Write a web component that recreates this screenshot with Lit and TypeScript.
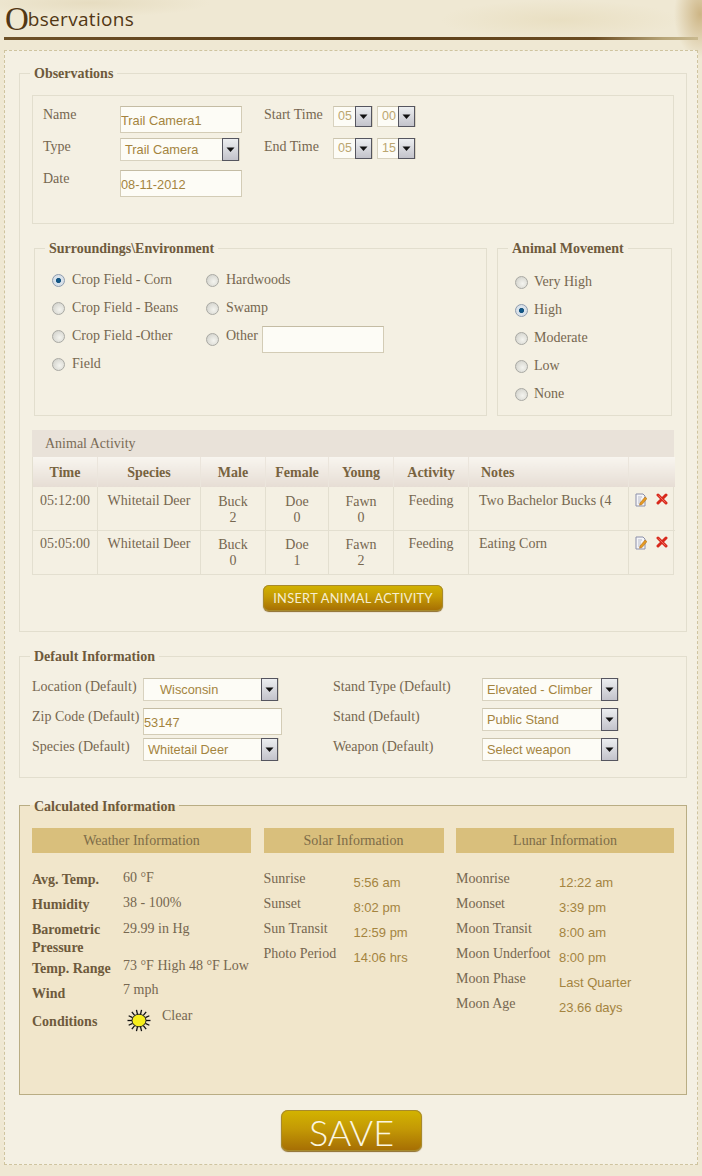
import { LitElement, html, css, svg } from "lit";
import { customElement } from "lit/decorators.js";

const arrow = html`<svg width="9" height="7" viewBox="0 0 9 7"><path d="M0.5 1.5h8L4.5 6z" fill="#111"/></svg>`;

function sel(text: string, cls = "", valCls = "") {
  return html`<div class="sel ${cls}"><span class="val ${valCls}">${text}</span><span class="btn">${arrow}</span></div>`;
}
function opt(label: string, checked = false) {
  return html`<label class="opt"><input class="radio" type="radio" ?checked=${checked} /><span>${label}</span></label>`;
}

const editIcon = html`<svg width="12" height="14" viewBox="0 0 12 14">
  <path d="M1 1h7l2 2v10H1z" fill="#f5f5f8" stroke="#8b8fa8"/>
  <path d="M3 4h4M3 6h3M3 8h3M3 10h4" stroke="#b9bcc9"/>
  <path d="M5 10l5-6 2 1.600-5 6-2.500 .6z" fill="#e59a22" stroke="#a8660f" stroke-width=".5"/>
</svg>`;
const delIcon = html`<svg width="12" height="12" viewBox="0 0 12 12">
  <path d="M2 2l8 8M10 2l-8 8" stroke="#d8291c" stroke-width="3" stroke-linecap="round"/>
  <path d="M2.500 2.500l7 7" stroke="#f2786c" stroke-width=".8"/>
</svg>`;

const rays = Array.from({ length: 14 }, (_, i) => {
  const a = (i / 14) * Math.PI * 2;
  const x1 = 12 + Math.cos(a) * 7;
  const y1 = 11.5 + Math.sin(a) * 6.5;
  const x2 = 12 + Math.cos(a) * 11.5;
  const y2 = 11.5 + Math.sin(a) * 11;
  return svg`<line x1=${x1} y1=${y1} x2=${x2} y2=${y2} stroke="#111" stroke-width="1.300"/>`;
});
const sun = html`<svg class="sun" width="24" height="23" viewBox="0 0 24 23">${rays}
  <ellipse cx="12" cy="11.500" rx="7" ry="6.300" fill="#f6ee1c" stroke="#222" stroke-width="1"/></svg>`;

const weather = [
  { l: "Avg. Temp.", v: "60 °F", h: 25, o: -2 },
  { l: "Humidity", v: "38 - 100%", h: 25, o: -2 },
  { l: "Barometric Pressure", v: "29.99 in Hg", h: 39, o: -1 },
  { l: "Temp. Range", v: "73 °F High 48 °F Low", h: 25, o: -3 },
  { l: "Wind", v: "7 mph", h: 28, o: -4 },
];
const solar = [
  ["Sunrise", "5:56 am"],
  ["Sunset", "8:02 pm"],
  ["Sun Transit", "12:59 pm"],
  ["Photo Period", "14:06 hrs"],
];
const lunar = [
  ["Moonrise", "12:22 am"],
  ["Moonset", "3:39 pm"],
  ["Moon Transit", "8:00 am"],
  ["Moon Underfoot", "8:00 pm"],
  ["Moon Phase", "Last Quarter"],
  ["Moon Age", "23.66 days"],
];
const activity = [
  ["05:12:00", "Whitetail Deer", "Buck", "2", "Doe", "0", "Fawn", "0", "Feeding", "Two Bachelor Bucks (4"],
  ["05:05:00", "Whitetail Deer", "Buck", "0", "Doe", "1", "Fawn", "2", "Feeding", "Eating Corn"],
];

@customElement("app-root")
export class AppRoot extends LitElement {
  static styles = css`
    :host {
      display: block;
      width: 702px;
      height: 1176px;
      overflow: hidden;
      box-sizing: border-box;
      font: 14px/16px "Liberation Serif", serif;
      color: #766750;
      background:
        radial-gradient(ellipse 26px 44px at 700px 14px, #cdb585 0%, rgba(205, 181, 133, 0) 100%),
        radial-gradient(ellipse 120px 14px at 90px 3px, #e6dcc0 0%, rgba(230, 220, 192, 0) 100%),
        radial-gradient(ellipse 120px 20px at 560px 20px, #e9dfc2 0%, rgba(233, 223, 194, 0) 100%),
        #efe8d3;
    }
    * { box-sizing: border-box; }
    .head { height: 50px; padding: 0 4px; }
    .title {
      display: flex;
      align-items: flex-start;
      height: 37px;
      padding: 0 0 0 1px;
      margin: 0;
      font: 400 19px/26px "Open Sans", sans-serif;
      letter-spacing: 0.300px;
      color: #523714;
    }
    .title b { display: block; margin-top: 1px; font: 400 33px/36px "Liberation Serif", serif; letter-spacing: -1px; }
    .title span { display: block; margin-top: 6px; }
    .rule {
      height: 3px;
      background: linear-gradient(90deg, #6e5128 0%, #5a3d17 50%, #6b4c22 85%, #b7a578 95%, #c9b98f 100%);
    }
    .panel {
      margin: 0 4px;
      height: 1115px;
      border: 1px dashed #cfc49f;
      background: #f4f0e3;
      padding: 14px 10px 0 14px;
    }
    fieldset {
      margin: 0;
      padding: 0;
      min-width: 0;
      border: 1px solid #e2dece;
    }
    legend {
      margin-left: -2px;
      padding: 0 4px;
      font-weight: 700;
      line-height: 16px;
      color: #6e5a3c;
    }
    legend span { display: block; transform: translateY(1px); }
    .env legend, .move legend { margin-left: -7px; }
    .obs { width: 668px; padding: 0 0 20px 12px; }
    .box {
      width: 642px;
      height: 129px;
      margin-top: 14px;
      border: 1px solid #e2dece;
      padding: 10px 0 0 10px;
      display: grid;
      grid-template-columns: 77px 144px 69px auto;
      grid-auto-rows: 32px;
      justify-content: start;
    }
    .box > span { padding-top: 1px; }
    .pair { display: flex; gap: 4px; }
    input.text {
      display: block;
      height: 27px;
      padding: 1px 0 0 0;
      border: 1px solid #d3ccb6;
      border-top-color: #c4bca4;
      background: #fdfcf6;
      font: 12.800px "Liberation Sans", sans-serif;
      color: #a4843f;
      outline: none;
      margin: 0;
    }
    .w122 { width: 122px; }
    .w139 { width: 139px; }
    .sel {
      display: flex;
      height: 23px;
      background: #fdfcf6;
      border: 1px solid #d8d2bf;
      border-top-color: #cbc4ae;
      font: 12.800px/21px "Liberation Sans", sans-serif;
      color: #a4843f;
    }
    .val { flex: 1; padding-left: 4px; white-space: nowrap; overflow: hidden; }
    .ind { padding-left: 16px; }
    .btn {
      width: 17px;
      margin-top: -1px;
      margin-bottom: -1px;
      border: 1px solid #55555f;
      background: linear-gradient(#eceef0, #c3c3cb);
      display: flex;
      align-items: center;
      justify-content: center;
    }
    .t { width: 40px; height: 21px; font-size: 12.500px; line-height: 19px; color: #bba671; }
    .t2 { width: 39px; }
    .w120 { width: 120px; }
    .w136 { width: 136px; }
    .w137 { width: 137px; }
    .split { display: flex; gap: 10px; margin: 16px 0 0 2px; }
    .env { width: 453px; height: 176px; padding: 10px 0 0 17px; display: grid; grid-template-columns: 154px 1fr; grid-template-rows: repeat(4, 28px); grid-auto-flow: column; }
    .move { width: 175px; height: 176px; padding: 12px 0 0 17px; }
    .opt { display: flex; align-items: center; gap: 7px; height: 28px; white-space: nowrap; }
    .move .opt { gap: 6px; }
    .radio {
      appearance: none;
      -webkit-appearance: none;
      width: 13px;
      height: 13px;
      flex: none;
      margin: 1px 0 0;
      border-radius: 50%;
      border: 1px solid #a9a9a3;
      background: radial-gradient(circle at 60% 60%, #f4f4ef 0, #dcdcd6 60%, #c7c7c2 100%);
    }
    .radio:checked {
      border-color: #8d9caf;
      background: radial-gradient(circle, #0e5c8f 0, #14537e 28%, #d9e3ec 38%, #d8dbe0 100%);
    }
    .other .radio { margin-top: 6px; }
    .other input.text { width: 122px; margin: 7px 0 0 -3px; padding: 0; }
    .table-wrap { width: 642px; margin-top: 14px; border: 1px solid #e3dfd0; border-top: 0; }
    .band { height: 27px; background: #e9e2d9; padding: 6px 0 0 13px; line-height: 16px; color: #7a6b56; margin: 0 -1px; }
    table { width: 642px; margin: 0 -1px; border-collapse: collapse; table-layout: fixed; }
    th {
      height: 30px;
      padding: 2px 0 0;
      font-weight: 700;
      color: #78633f;
      background: linear-gradient(#f8f5ef, #e6ddd4);
      border-left: 1px solid #ebe5dc;
      text-align: center;
    }
    td {
      height: 43.500px;
      padding: 5px 0 0;
      vertical-align: top;
      text-align: center;
      border-left: 1px solid #e3dfd0;
      border-bottom: 1px solid #e3dfd0;
    }
    tr:first-child td { padding-top: 6px; }
    tr:first-child td.two { padding-top: 7px; }
    td.two { padding-top: 6px; }
    tr:last-child td { border-bottom: 0; }
    th:first-child, td:first-child { border-left: 1px solid #e3dfd0; }
    .tm { width: 65px; } .sp { width: 103px; } .ma { width: 65px; } .fe { width: 63px; } .yo { width: 65px; }
    .ac { width: 75px; } .no { width: 160px; } .ic { width: 46px; }
    .left { text-align: left; padding-left: 10px; white-space: nowrap; overflow: hidden; }
    td.left { padding-left: 10px; }
    th.left { padding-left: 12px; }
    .icons { display: flex; gap: 9px; padding: 0 0 0 6px; }
    .act { display: flex; justify-content: center; margin: 10px 0 0 -12px; }
    .gold {
      display: block;
      border: 0;
      padding: 0;
      background: linear-gradient(#d3b400 0%, #c49a05 45%, #a56d04 100%);
      box-shadow: 0 0 0 1px #a78a2c inset, 0 1px 1px #8c6c2a;
      color: #f6eed0;
      font-family: Lato, sans-serif;
    }
    .insert { width: 180px; height: 26px; border-radius: 6px; font-size: 12.800px; letter-spacing: 0.300px; }
    .def { width: 668px; height: 130px; margin-top: 16px; padding: 7px 0 0 12px; }
    .def-grid { display: grid; grid-template-columns: 111px 190px 149px 137px; grid-auto-rows: 30px; }
    .def-grid .lab { padding-top: 8px; white-space: nowrap; }
    .def-grid .sel, .def-grid input.text { margin-top: 7px; }
    .calc { width: 668px; height: 298px; margin-top: 19px; padding: 15px 0 0 12px; background: #f1e6cb; border-color: #b9ad84; }
    .calc legend { background: linear-gradient(#f4f0e3 50%, #f1e6cb 50%); }
    .calc legend span { transform: translateY(2px); }
    .cols { display: grid; grid-template-columns: 219px 180px 218px; column-gap: 12.500px; }
    .bandc { height: 25px; background: #d9bf7c; color: #7d6c48; text-align: center; line-height: 25px; margin-bottom: 18px; }
    .wrow { display: grid; grid-template-columns: 91px 1fr; }
    .wrow b { line-height: 18px; color: #6e5a3c; }
    .wv { line-height: 18px; white-space: nowrap; }
    .cond { display: flex; gap: 11px; align-items: flex-start; }
    .sun { display: block; margin: 2px 0 0 4px; }
    .srow { display: grid; height: 25px; }
    .solar .srow { grid-template-columns: 90px 1fr; }
    .lunar .srow { grid-template-columns: 103px 1fr; }
    .sv { font: 13px/16px "Liberation Sans", sans-serif; color: #a4843f; padding-top: 4px; white-space: nowrap; }
    .savebar { display: flex; margin: 15px 0 0 262px; }
    .save { width: 141px; height: 41px; border-radius: 7px; font-size: 36px; font-weight: 300; color: #fbf6e0; }
  `;

  render() {
    return html`
      <div class="head">
        <h1 class="title"><b>O</b><span>bservations</span></h1>
        <div class="rule"></div>
      </div>
      <div class="panel">
        <fieldset class="obs">
          <legend><span>Observations</span></legend>
          <div class="box">
            <span>Name</span>
            <input class="text w122" .value=${"Trail Camera1"} />
            <span>Start Time</span>
            <div class="pair">${sel("05", "t")}${sel("00", "t t2")}</div>
            <span>Type</span>
            ${sel("Trail Camera", "w120")}
            <span>End Time</span>
            <div class="pair">${sel("05", "t")}${sel("15", "t t2")}</div>
            <span>Date</span>
            <input class="text w122" .value=${"08-11-2012"} />
          </div>
          <div class="split">
            <fieldset class="env">
              <legend><span>Surroundings\\Environment</span></legend>
              ${opt("Crop Field - Corn", true)}${opt("Crop Field - Beans")}${opt("Crop Field -Other")}${opt("Field")}
              ${opt("Hardwoods")}${opt("Swamp")}
              <label class="opt other"><input class="radio" type="radio" /><span>Other</span><input class="text" /></label>
            </fieldset>
            <fieldset class="move">
              <legend><span>Animal Movement</span></legend>
              ${opt("Very High")}${opt("High", true)}${opt("Moderate")}${opt("Low")}${opt("None")}
            </fieldset>
          </div>
          <div class="table-wrap">
            <div class="band">Animal Activity</div>
            <table>
              <thead>
                <tr>
                  <th class="tm">Time</th><th class="sp">Species</th><th class="ma">Male</th><th class="fe">Female</th>
                  <th class="yo">Young</th><th class="ac">Activity</th><th class="no left">Notes</th><th class="ic"></th>
                </tr>
              </thead>
              <tbody>
                ${activity.map(
                  (r) => html`<tr>
                    <td>${r[0]}</td><td>${r[1]}</td>
                    <td class="two">${r[2]}<br />${r[3]}</td><td class="two">${r[4]}<br />${r[5]}</td><td class="two">${r[6]}<br />${r[7]}</td>
                    <td>${r[8]}</td><td class="left">${r[9]}</td>
                    <td><div class="icons">${editIcon}${delIcon}</div></td>
                  </tr>`
                )}
              </tbody>
            </table>
          </div>
          <div class="act"><button class="gold insert">INSERT ANIMAL ACTIVITY</button></div>
        </fieldset>

        <fieldset class="def">
          <legend><span>Default Information</span></legend>
          <div class="def-grid">
            <span class="lab">Location (Default)</span>
            ${sel("Wisconsin", "w136", "ind")}
            <span class="lab">Stand Type (Default)</span>
            ${sel("Elevated - Climber", "w137")}
            <span class="lab">Zip Code (Default)</span>
            <input class="text w139" .value=${"53147"} />
            <span class="lab">Stand (Default)</span>
            ${sel("Public Stand", "w137")}
            <span class="lab">Species (Default)</span>
            ${sel("Whitetail Deer", "w136")}
            <span class="lab">Weapon (Default)</span>
            ${sel("Select weapon", "w137")}
          </div>
        </fieldset>

        <fieldset class="calc">
          <legend><span>Calculated Information</span></legend>
          <div class="cols">
            <div>
              <div class="bandc">Weather Information</div>
              ${weather.map(
                (r) => html`<div class="wrow" style="height:${r.h}px">
                  <b>${r.l}</b><span class="wv" style="margin-top:${r.o}px">${r.v}</span>
                </div>`
              )}
              <div class="wrow">
                <b>Conditions</b>
                <div class="cond" style="margin-top:-6px">${sun}<span class="wv">Clear</span></div>
              </div>
            </div>
            <div class="solar">
              <div class="bandc">Solar Information</div>
              ${solar.map((r) => html`<div class="srow"><span>${r[0]}</span><span class="sv">${r[1]}</span></div>`)}
            </div>
            <div class="lunar">
              <div class="bandc">Lunar Information</div>
              ${lunar.map((r) => html`<div class="srow"><span>${r[0]}</span><span class="sv">${r[1]}</span></div>`)}
            </div>
          </div>
        </fieldset>

        <div class="savebar"><button class="gold save">SAVE</button></div>
      </div>
    `;
  }
}
